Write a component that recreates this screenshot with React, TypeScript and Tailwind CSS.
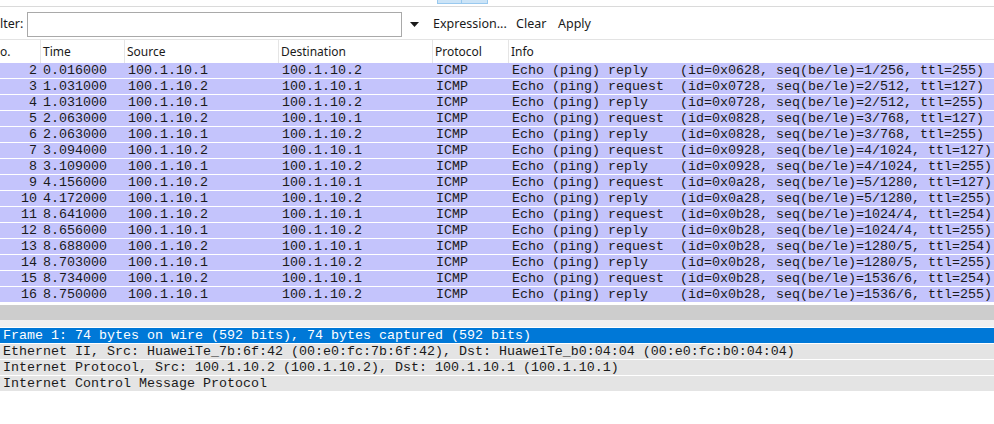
import { ReactElement } from "react";

type Packet = {
  no: number;
  time: string;
  src: string;
  dst: string;
  info: string;
};

const A = "100.1.10.1";
const B = "100.1.10.2";

function info(kind: "reply" | "request", id: string, seq: string, ttl: number): string {
  const label = kind === "reply" ? "Echo (ping) reply    " : "Echo (ping) request  ";
  return `${label}(id=${id}, seq(be/le)=${seq}, ttl=${ttl})`;
}

const packets: Packet[] = [
  { no: 2, time: "0.016000", src: A, dst: B, info: info("reply", "0x0628", "1/256", 255) },
  { no: 3, time: "1.031000", src: B, dst: A, info: info("request", "0x0728", "2/512", 127) },
  { no: 4, time: "1.031000", src: A, dst: B, info: info("reply", "0x0728", "2/512", 255) },
  { no: 5, time: "2.063000", src: B, dst: A, info: info("request", "0x0828", "3/768", 127) },
  { no: 6, time: "2.063000", src: A, dst: B, info: info("reply", "0x0828", "3/768", 255) },
  { no: 7, time: "3.094000", src: B, dst: A, info: info("request", "0x0928", "4/1024", 127) },
  { no: 8, time: "3.109000", src: A, dst: B, info: info("reply", "0x0928", "4/1024", 255) },
  { no: 9, time: "4.156000", src: B, dst: A, info: info("request", "0x0a28", "5/1280", 127) },
  { no: 10, time: "4.172000", src: A, dst: B, info: info("reply", "0x0a28", "5/1280", 255) },
  { no: 11, time: "8.641000", src: B, dst: A, info: info("request", "0x0b28", "1024/4", 254) },
  { no: 12, time: "8.656000", src: A, dst: B, info: info("reply", "0x0b28", "1024/4", 255) },
  { no: 13, time: "8.688000", src: B, dst: A, info: info("request", "0x0b28", "1280/5", 254) },
  { no: 14, time: "8.703000", src: A, dst: B, info: info("reply", "0x0b28", "1280/5", 255) },
  { no: 15, time: "8.734000", src: B, dst: A, info: info("request", "0x0b28", "1536/6", 254) },
  { no: 16, time: "8.750000", src: A, dst: B, info: info("reply", "0x0b28", "1536/6", 255) },
];

const details = [
  "Ethernet II, Src: HuaweiTe_7b:6f:42 (00:e0:fc:7b:6f:42), Dst: HuaweiTe_b0:04:04 (00:e0:fc:b0:04:04)",
  "Internet Protocol, Src: 100.1.10.2 (100.1.10.2), Dst: 100.1.10.1 (100.1.10.1)",
  "Internet Control Message Protocol",
];

const mono = "font-['Liberation_Mono',monospace] text-[13.33px] leading-[15px]";

export default function App(): ReactElement {
  return (
    <div className="w-[994px] h-[424px] overflow-hidden bg-white text-[#1a1a1a] font-['Noto_Sans',sans-serif]">
      {/* toolbar remnants */}
      <div className="h-[6px] flex pl-[437px]">
        <div className="w-[25px] h-[4px] bg-[#cce4f7] border-x border-b border-[#99c9ef]" />
        <div className="w-[26px] h-[4px] bg-[#cce4f7] border-r border-b border-[#99c9ef]" />
      </div>
      <div className="h-px bg-[#dadada]" />

      {/* filter bar */}
      <div className="h-[32px] pt-[3px] flex items-center text-[12.5px]">
        <span className="w-[27px] whitespace-nowrap">lter:</span>
        <div className="w-[375px] h-[25px] border border-[#a9a9a9] bg-white" />
        <svg className="ml-[8px]" width="9" height="5" viewBox="0 0 9 5">
          <path d="M0 0h9L4.5 5z" fill="#1a1a1a" />
        </svg>
        <span className="ml-[14px] w-[83px] whitespace-nowrap">Expression...</span>
        <span className="w-[42px]">Clear</span>
        <span>Apply</span>
      </div>
      <div className="h-px bg-[#e3e3e3]" />

      {/* packet list header */}
      <div className="h-[23px] flex items-center text-[12px] bg-white">
        <div className="w-[41px] h-full border-r border-[#e5e5e5] flex items-center">o.</div>
        <div className="w-[84px] h-full border-r border-[#e5e5e5] flex items-center pl-[2px]">Time</div>
        <div className="w-[154px] h-full border-r border-[#e5e5e5] flex items-center pl-[2px]">Source</div>
        <div className="w-[154px] h-full border-r border-[#e5e5e5] flex items-center pl-[2px]">Destination</div>
        <div className="w-[76px] h-full border-r border-[#e5e5e5] flex items-center pl-[2px]">Protocol</div>
        <div className="flex-1 h-full flex items-center pl-[2px]">Info</div>
      </div>

      {/* packet rows */}
      <div className={`${mono} flex flex-col gap-px`}>
        {packets.map((p) => (
          <div key={p.no} className="h-[15px] flex bg-[#c4c4fc] whitespace-pre">
            <span className="w-[41px] text-right pr-[4px]">{p.no}</span>
            <span className="w-[84px] pl-[2px]">{p.time}</span>
            <span className="w-[154px] pl-[3px]">{p.src}</span>
            <span className="w-[154px] pl-[3px]">{p.dst}</span>
            <span className="w-[76px] pl-[3px]">ICMP</span>
            <span className="flex-1 pl-[3px]">{p.info}</span>
          </div>
        ))}
      </div>

      {/* horizontal scrollbar + splitter */}
      <div className="h-[2px] mt-px" />
      <div className="h-[15px] bg-[#cdcdcd]" />
      <div className="h-[7px] bg-[#f0f0f0]" />
      <div className="h-px bg-white" />

      {/* packet details */}
      <div className={`${mono} flex flex-col gap-px`}>
        <div className="h-[15px] bg-[#0078d7] text-white pl-[3px] whitespace-pre">
          Frame 1: 74 bytes on wire (592 bits), 74 bytes captured (592 bits)
        </div>
        {details.map((d) => (
          <div key={d} className="h-[15px] bg-[#e4e4e4] pl-[3px] whitespace-pre">
            {d}
          </div>
        ))}
      </div>
    </div>
  );
}
